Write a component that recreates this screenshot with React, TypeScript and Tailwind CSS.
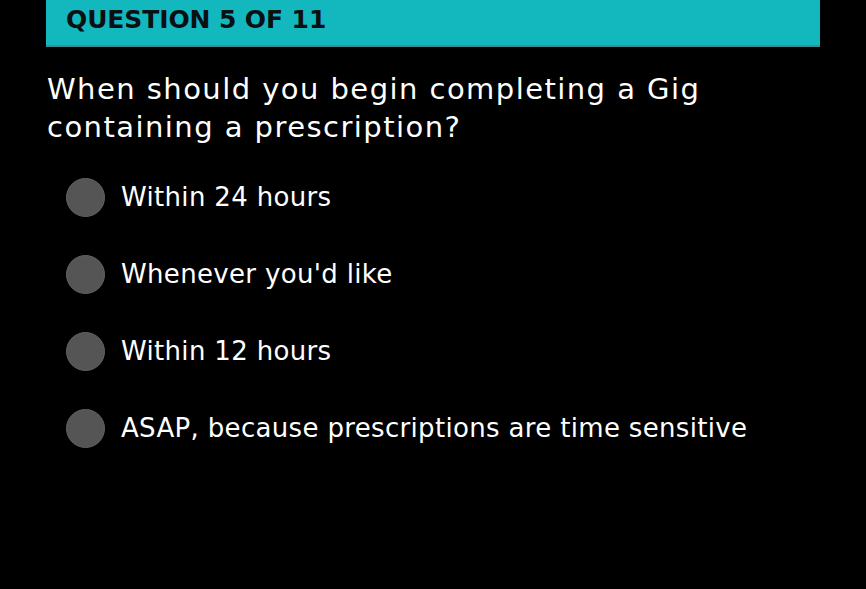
const OPTIONS = [
  'Within 24 hours',
  "Whenever you'd like",
  'Within 12 hours',
  'ASAP, because prescriptions are time sensitive',
]

export default function App() {
  return (
    <div className="h-[589px] w-[866px] overflow-hidden bg-black font-['DejaVu_Sans',sans-serif]">
      <div className="mx-[46px] h-[47px] border-b-2 border-[#3f8f92] bg-[#12b8be] pt-[9px] pl-5">
        <h1 className="text-[25px] leading-[22px] font-bold tracking-[-0.1px] text-[#0a0f12]">
          QUESTION 5 OF 11
        </h1>
      </div>

      <div className="px-[47px] pt-[23px]">
        <h2 className="text-[29px] leading-[38px] tracking-[1.45px] text-white">
          When should you begin completing a Gig
          <br />
          containing a prescription?
        </h2>

        <ul className="mt-[32px] flex flex-col gap-[39.3px] pl-[19px]">
          {OPTIONS.map((o) => (
            <li key={o} className="flex h-[38px] items-center gap-[16px]">
              <span className="h-[39px] w-[39px] shrink-0 rounded-full border border-[#626262] bg-[#555555]" />
              <span className="text-[26px] tracking-[0.33px] text-white">{o}</span>
            </li>
          ))}
        </ul>
      </div>
    </div>
  )
}
